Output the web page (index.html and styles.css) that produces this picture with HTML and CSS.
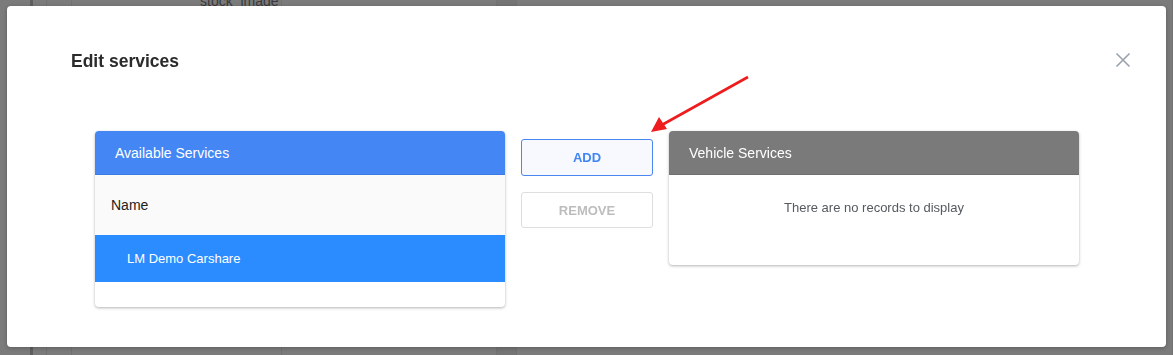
FILE: index.html
```html
<!DOCTYPE html>
<html lang="en">
<head>
    <meta charset="UTF-8">
    <meta name="viewport" content="width=device-width, initial-scale=1.0">
    <title>Edit services</title>
    <link rel="stylesheet" href="styles.css">
</head>
<body>
    <!-- Page derriere le modal -->
    <div class="backdrop-table">
        <div class="bg-col c1"></div>
        <div class="bg-col c2"></div>
        <div class="bg-col c3"></div>
        <div class="bg-col c4"><span class="bg-text">stock_image</span></div>
        <div class="bg-col c5"></div>
        <div class="bg-col c6"></div>
        <div class="bg-col c7"></div>
    </div>

    <div class="overlay">
        <div class="modal">
            <div class="modal-header">
                <h2>Edit services</h2>
                <button class="close" aria-label="Close">
                    <svg width="16" height="16" viewBox="0 0 16 16">
                        <path d="M1.5 1.5 L14.5 14.5 M14.5 1.5 L1.5 14.5" stroke="#9aa2ac" stroke-width="1.6" fill="none"/>
                    </svg>
                </button>
            </div>

            <div class="modal-body">
                <div class="panel">
                    <div class="panel-head blue">Available Services</div>
                    <div class="row head-row">Name</div>
                    <div class="row selected">LM Demo Carshare</div>
                    <div class="row empty"></div>
                </div>

                <div class="actions">
                    <button class="btn add">ADD</button>
                    <button class="btn remove" disabled>REMOVE</button>
                </div>

                <div class="panel">
                    <div class="panel-head grey">Vehicle Services</div>
                    <div class="no-records">There are no records to display</div>
                </div>
            </div>
        </div>

        <!-- Fleche d'annotation -->
        <svg class="arrow" width="1173" height="355" viewBox="0 0 1173 355">
            <line x1="748" y1="77" x2="660" y2="126" stroke="#ee1c1c" stroke-width="2.6"/>
            <polygon points="651,132 659,117 667,129" fill="#ee1c1c"/>
        </svg>
    </div>
</body>
</html>
```

FILE: styles.css
```css
* {
    box-sizing: border-box;
}

html, body {
    margin: 0;
    height: 100%;
}

body {
    font-family: 'Liberation Sans', Arial, sans-serif;
    background-color: #7b7b7b;
    overflow: hidden;
}

.backdrop-table {
    display: flex;
    height: 100%;
}

.bg-col {
    border-right: 1px solid #727272;
    position: relative;
    flex-shrink: 0;
}

.c1 { width: 33px; border-right: 3px solid #5e5e5e; }
.c2 { width: 14px; }
.c3 { width: 25px; }
.c4 { width: 210px; }
.c5 { width: 215px; }
.c6 { width: 20px; background-color: #757575; }
.c7 { flex: 1; }

.bg-text {
    position: absolute;
    top: -7px;
    left: 128px;
    font-size: 14px;
    color: #3a3a3a;
    white-space: nowrap;
}

.overlay {
    position: fixed;
    inset: 0;
}

.modal {
    position: absolute;
    top: 6px;
    left: 7px;
    width: 1159px;
    height: 341px;
    background: #fff;
    border-radius: 4px;
    box-shadow: 0 1px 4px rgba(0, 0, 0, 0.25);
}

.modal-header {
    display: flex;
    justify-content: space-between;
    align-items: flex-start;
    padding: 43px 35px 0 64px;
}

.modal-header h2 {
    margin: 0;
    font-size: 17.5px;
    line-height: 24px;
    font-weight: bold;
    color: #2b2b2b;
}

.close {
    background: none;
    border: none;
    padding: 0;
    margin-top: 3px;
    cursor: pointer;
}

.modal-body {
    display: flex;
    align-items: flex-start;
    gap: 16px;
    padding: 58px 87px 0 88px;
}

.panel {
    flex: 0 0 410px;
    background: #fff;
    border-radius: 4px;
    overflow: hidden;
    box-shadow: 0 1px 3px rgba(0, 0, 0, 0.3);
}

.panel-head {
    height: 44px;
    line-height: 44px;
    padding-left: 20px;
    font-size: 14px;
    color: #fff;
    border-bottom: 1px solid rgba(0, 0, 0, 0.08);
}

.panel-head.blue {
    background-color: #4386f4;
}

.panel-head.grey {
    background-color: #7a7a7a;
}

.row {
    font-size: 14px;
}

.head-row {
    height: 60px;
    line-height: 60px;
    padding-left: 16px;
    background-color: #fafafa;
    color: #222;
}

.selected {
    height: 47px;
    line-height: 47px;
    padding-left: 32px;
    font-size: 13px;
    background-color: #2b8cff;
    color: #fff;
}

.empty {
    height: 25px;
}

.actions {
    display: flex;
    flex-direction: column;
    gap: 16px;
    flex: 0 0 132px;
    padding-top: 8px;
}

.btn {
    font-family: inherit;
    font-size: 13px;
    font-weight: bold;
    border-radius: 3px;
    background: #fff;
    height: 36px;
    width: 100%;
    margin: 0;
    padding: 0;
}

.btn.add {
    height: 37px;
    color: #4285f4;
    border: 1px solid #4a86f0;
    background-color: #f7f9ff;
    cursor: pointer;
}

.btn.remove {
    color: #bdbdbd;
    border: 1px solid #dedede;
}

.no-records {
    height: 90px;
    padding-top: 25px;
    line-height: 16px;
    text-align: center;
    font-size: 13px;
    color: #555a60;
}

.arrow {
    position: absolute;
    top: 0;
    left: 0;
    pointer-events: none;
}
```
